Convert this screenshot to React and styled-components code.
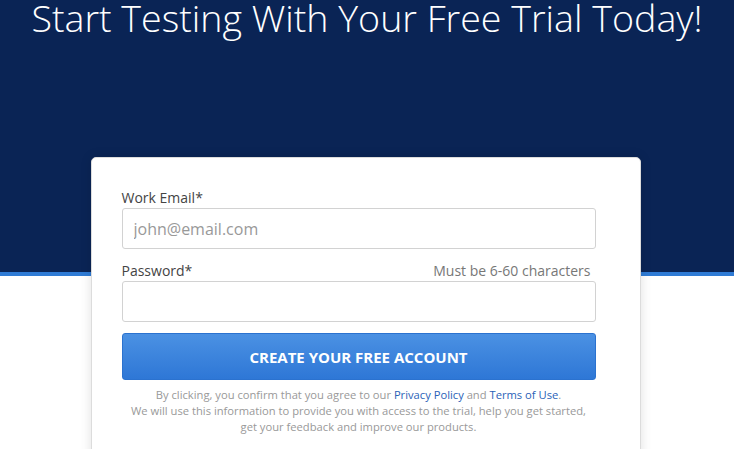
import styled, { createGlobalStyle } from 'styled-components'

const GlobalStyle = createGlobalStyle`
  body {
    margin: 0;
    background: #fff;
    font-family: "Open Sans", "Liberation Sans", sans-serif;
  }
  * { box-sizing: border-box; }
`

const Page = styled.div`
  width: 734px;
  min-height: 449px;
  overflow: hidden;
`

const Hero = styled.header`
  height: 276px;
  background: #0a2455;
  border-bottom: 4px solid #2f7bd5;
  text-align: center;
  overflow: hidden;
`

const Title = styled.h1`
  margin: -1px 0 0;
  font-size: 37.6px;
  line-height: 38px;
  font-weight: 300;
  color: #fff;
  white-space: nowrap;
`

const CardWrap = styled.div`
  display: flex;
  justify-content: center;
  margin-top: -119px;
  padding-right: 3px;
`

const Card = styled.form`
  width: 550px;
  background: #fff;
  border: 1px solid #dcdcdc;
  border-radius: 5px;
  box-shadow: 0 0 12px rgba(0, 0, 0, 0.12);
  padding: 30px 44px 40px 30px;
  display: flex;
  flex-direction: column;
`

const LabelRow = styled.div`
  display: flex;
  justify-content: space-between;
  align-items: baseline;
  margin-top: ${p => (p.$first ? '0' : '12px')};
  margin-bottom: 1px;
`

const Label = styled.label`
  font-size: 14px;
  line-height: 19px;
  color: #444;
`

const Hint = styled.span`
  font-size: 14px;
  line-height: 19px;
  color: #777;
  margin-right: 5px;
`

const Input = styled.input`
  width: 100%;
  height: 41px;
  border: 1px solid #d2d2d2;
  border-radius: 3px;
  padding: 0 11px;
  font-family: inherit;
  font-size: 16px;
  color: #333;
  outline: none;

  &::placeholder {
    color: #999;
  }
`

const Submit = styled.button`
  margin-top: 11px;
  height: 47px;
  width: 100%;
  border: 1px solid #2b72cf;
  border-radius: 3px;
  background: linear-gradient(#4b91e3, #2e77d6);
  color: #fff;
  font-family: inherit;
  font-size: 15px;
  font-weight: 700;
  cursor: pointer;
`

const Legal = styled.p`
  margin: 7px 0 0;
  font-size: 11.2px;
  line-height: 16px;
  color: #999;
  text-align: center;
`

const Link = styled.a`
  color: #2a62b8;
  text-decoration: none;
`

export default function App() {
  return (
    <Page>
      <GlobalStyle />
      <Hero>
        <Title>Start Testing With Your Free Trial Today!</Title>
      </Hero>
      <CardWrap>
        <Card onSubmit={e => e.preventDefault()}>
          <LabelRow $first>
            <Label htmlFor="email">Work Email*</Label>
          </LabelRow>
          <Input id="email" type="email" placeholder="john@email.com" />
          <LabelRow>
            <Label htmlFor="password">Password*</Label>
            <Hint>Must be 6-60 characters</Hint>
          </LabelRow>
          <Input id="password" type="password" />
          <Submit type="submit">CREATE YOUR FREE ACCOUNT</Submit>
          <Legal>
            By clicking, you confirm that you agree to our <Link href="#">Privacy Policy</Link> and{' '}
            <Link href="#">Terms of Use</Link>.
            <br />
            We will use this information to provide you with access to the trial, help you get started,
            <br />
            get your feedback and improve our products.
          </Legal>
        </Card>
      </CardWrap>
    </Page>
  )
}
